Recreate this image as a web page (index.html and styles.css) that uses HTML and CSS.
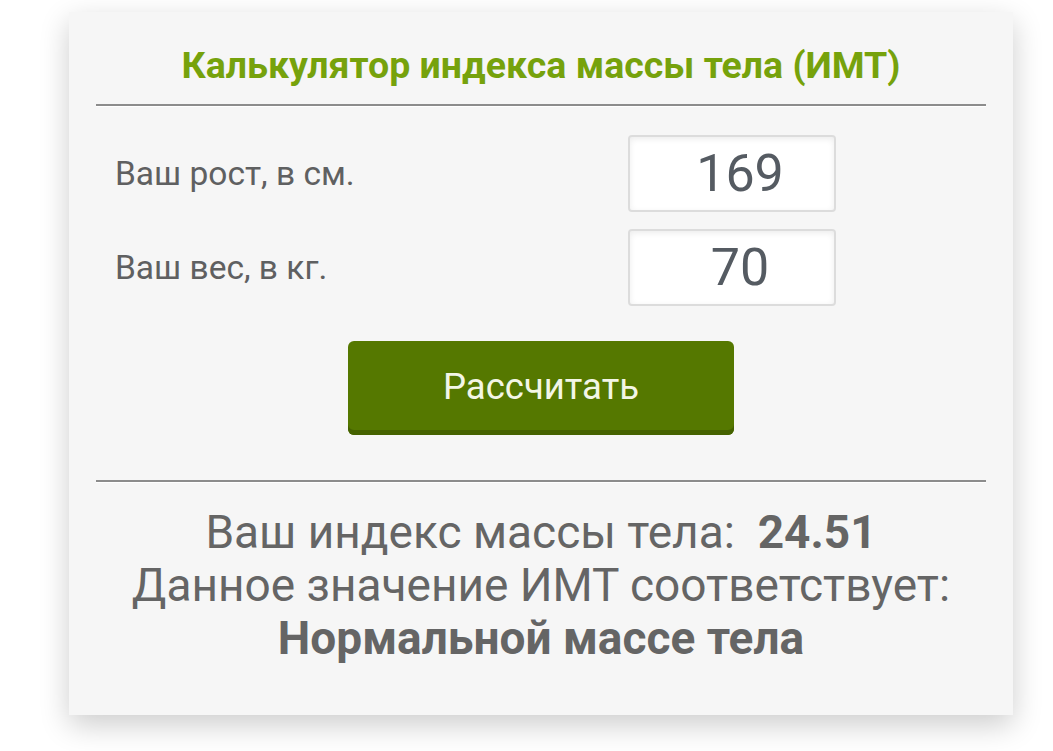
FILE: index.html
```html
<!DOCTYPE html>
<html lang="ru">
<head>
<meta charset="utf-8">
<title>Калькулятор ИМТ</title>
<link rel="stylesheet" href="styles.css">
</head>
<body>
<div class="card">
  <h1 class="title">Калькулятор индекса массы тела (ИМТ)</h1>
  <hr class="sep">
  <div class="row">
    <label class="label">Ваш рост, в см.</label>
    <div class="field">169</div>
  </div>
  <div class="row">
    <label class="label">Ваш вес, в кг.</label>
    <div class="field">70</div>
  </div>
  <div class="btn-wrap">
    <button class="btn">Рассчитать</button>
  </div>
  <hr class="sep sep2">
  <div class="result">
    <div>Ваш индекс массы тела:&nbsp; <b>24.51</b></div>
    <div>Данное значение ИМТ соответствует:</div>
    <div><b>Нормальной массе тела</b></div>
  </div>
</div>
</body>
</html>
```
FILE: styles.css
```css
html, body {
  margin: 0;
  padding: 0;
  background: #ffffff;
}
body {
  font-family: Roboto, "Noto Sans", sans-serif;
  padding: 12px 40px 36px 69px;
}
.card {
  width: 944px;
  height: 703px;
  box-sizing: border-box;
  background: #f6f6f6;
  box-shadow: 0 10px 28px rgba(0,0,0,0.2);
  padding: 30px 27px 0 27px;
}
.title {
  margin: 0;
  text-align: center;
  color: #76a20c;
  font-weight: 700;
  font-size: 37.5px;
  line-height: 46px;
}
.sep {
  margin: 16px 0 0 0;
  border: 0;
  height: 2px;
  background: #8c8c8c;
  border-bottom: 1px solid #ffffff;
}
.row {
  display: flex;
  align-items: center;
  justify-content: space-between;
  padding: 0 150px 0 19px;
}
.row + .row { margin-top: 17px; }
.sep + .row { margin-top: 28px; }
.label {
  color: #5f6061;
  font-size: 33.5px;
}
.field {
  width: 208px;
  height: 77px;
  box-sizing: border-box;
  border: 2px solid #dcdcdc;
  border-radius: 4px;
  background: #ffffff;
  box-shadow: inset 0 2px 6px rgba(0,0,0,0.08);
  color: #555b62;
  font-size: 52px;
  display: flex;
  align-items: center;
  justify-content: center;
  padding-left: 16px;
}
.btn-wrap {
  display: flex;
  justify-content: center;
  margin-top: 35px;
}
.btn {
  width: 386px;
  height: 94px;
  border: 0;
  border-radius: 6px;
  background: #557800;
  box-shadow: inset 0 -5px 0 #456200;
  color: #f3f6e6;
  font-family: Roboto, sans-serif;
  font-size: 36.5px;
  padding: 0 0 4px 0;
}
.sep2 { margin-top: 45px; }
.result {
  text-align: center;
  color: #656565;
  font-size: 46px;
  line-height: 53px;
  margin-top: 23px;
}
.result b { font-weight: 700; }
```
